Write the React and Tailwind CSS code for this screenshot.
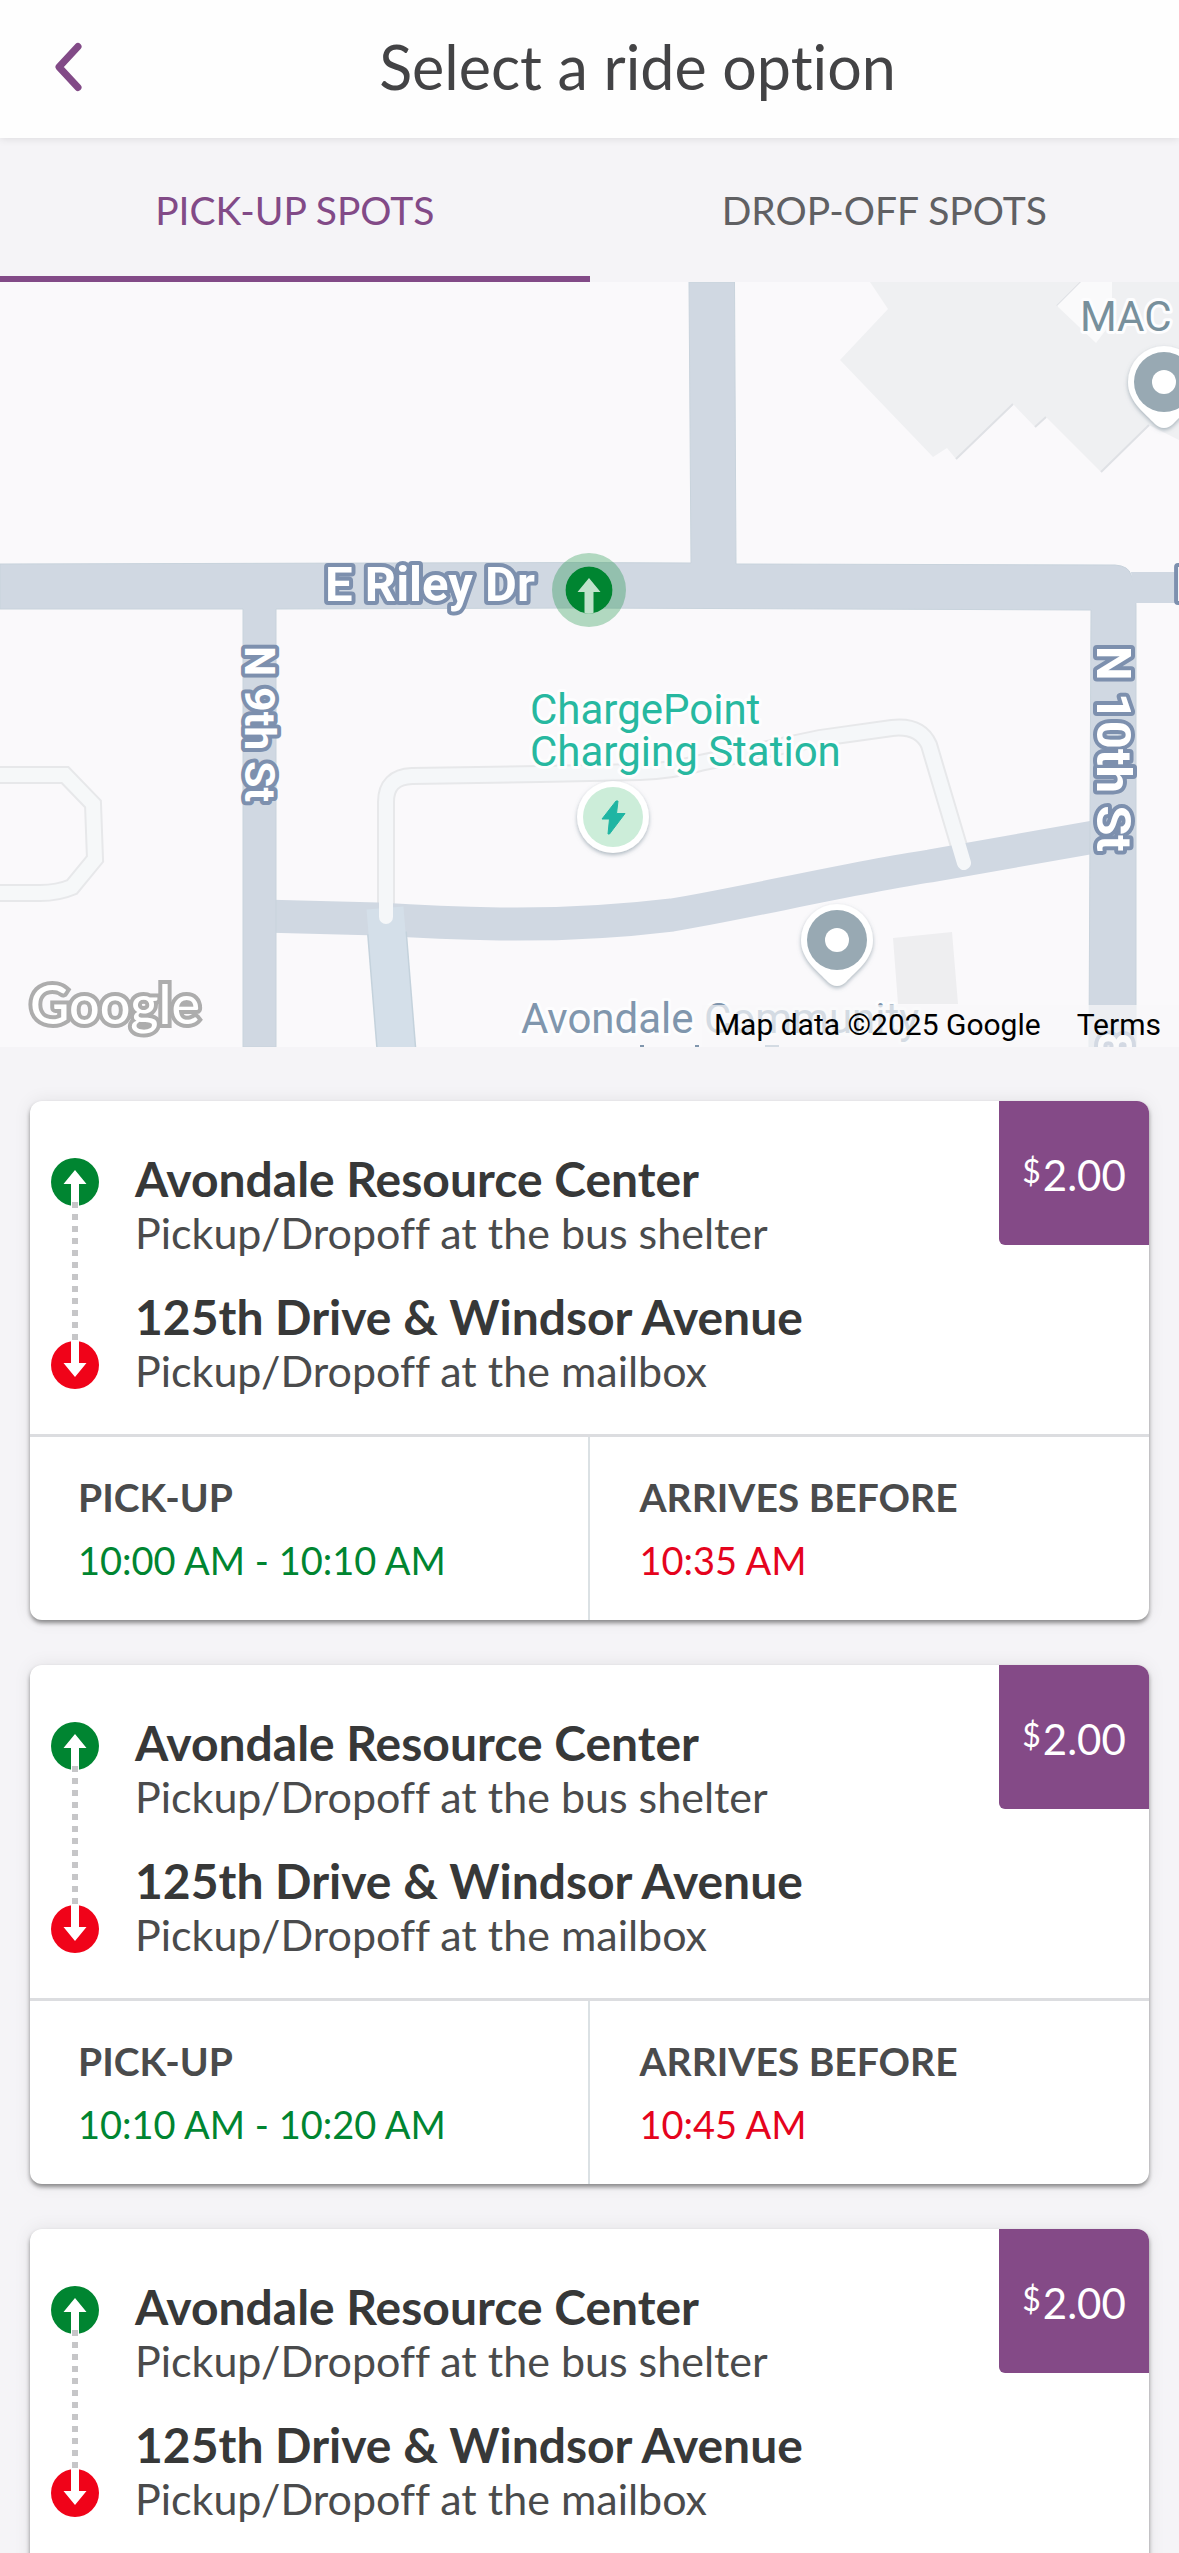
import React, { useState } from "react";

const rides = [
  { id: 1, pickup: "10:00 AM - 10:10 AM", arrival: "10:35 AM" },
  { id: 2, pickup: "10:10 AM - 10:20 AM", arrival: "10:45 AM" },
  { id: 3, pickup: "10:20 AM - 10:30 AM", arrival: "10:55 AM" },
];

function StopIcon({ down }) {
  return (
    <svg viewBox="0 0 48 48" className="block size-12" aria-hidden="true">
      <g transform={down ? "rotate(180 24 24)" : undefined}>
        <circle cx="24" cy="24" r="24" fill={down ? "#f00319" : "#008531"} />
        <path d="M24 12 L35.500 26 H28 V48 H20 V26 H12.500 Z" fill="#fff" />
      </g>
    </svg>
  );
}

function PlacePin({ x, y }) {
  return (
    <g transform={`translate(${x} ${y})`}>
      <path
        d="M0 -36 A36 36 0 0 1 36 0 C36 20 18 32 9 42 Q0 50 -9 42 C-18 32 -36 20 -36 0 A36 36 0 0 1 0 -36 Z"
        fill="#fff"
        filter="url(#soft)"
      />
      <circle r="30" fill="#98a9b3" />
      <circle r="12" fill="#fff" />
    </g>
  );
}

const streetText = {
  fill: "#fff",
  stroke: "#7d90ae",
  strokeWidth: 8,
  strokeLinejoin: "round",
  paintOrder: "stroke",
  fontWeight: 700,
};

const placeText = {
  stroke: "#fdfdfe",
  strokeWidth: 6,
  strokeLinejoin: "round",
  paintOrder: "stroke",
  fontSize: 42,
};

function StreetMap() {
  const path = "M386 635 V520 Q386 495 412 494 L540 492 L640 490 Q672 489 700 481 L820 456 L892 446 Q920 443 929 463 L964 581";
  const loop = "M-10 493 H65 L93 522 L95 577 L72 605 Q58 611 40 611 H-10";
  return (
    <svg
      viewBox="0 0 1179 765"
      preserveAspectRatio="xMidYMid slice"
      className="block size-full font-['Roboto',sans-serif]"
      role="img"
      aria-label="Map of pick-up spots"
    >
      <defs>
        <filter id="soft" x="-30%" y="-30%" width="160%" height="160%">
          <feDropShadow dx="0" dy="2" stdDeviation="2" floodColor="#6b7f8c" floodOpacity="0.55" />
        </filter>
      </defs>
      <rect width="1179" height="765" fill="#faf9fb" />

      <path
        d="M870 0 L888 27 L840 78 L933 175 L947 166 L956 177 L1013 122 L1035 145 L1046 135 L1101 190 L1149 143 L1179 158 V0 Z"
        fill="#eff0f2"
      />
      <path d="M956 177 L1013 122 M1035 145 L1046 135 M1101 190 L1149 143 M1057 24 L1081 0" stroke="#dfe1e5" strokeWidth="2" fill="none" />
      <path d="M1081 0 L1057 24 L1096 61 L1112 40 V0 Z" fill="#fafafb" />
      <path d="M893 656 L952 650 L958 722 H898 Z" fill="#eeeef0" />

      <path d={loop} fill="none" stroke="#e7e8ea" strokeWidth="18" />
      <path d={loop} fill="none" stroke="#f6f8f9" strokeWidth="14" />
      <path d={path} fill="none" stroke="#e7e8ea" strokeWidth="18" />

      <path d="M262 634 L378 637 Q440 641 500 642 Q590 643 672 633 C740 622 850 596 930 584 L1100 554" fill="none" stroke="#d0d8e2" strokeWidth="33" />
      <path d="M387 651 L397 775" fill="none" stroke="#c4d2dc" strokeWidth="40" />
      <path d="M385 626 L397 775" fill="none" stroke="#d4dfe9" strokeWidth="37" />
      <path d={path} fill="none" stroke="#f5f7f9" strokeWidth="14" strokeLinecap="round" />

      <path d="M0 282 L580 280.500 L691 281 L689 0 H734.500 L736 282 L1115 283 Q1129 284 1131 293 Q1136 300 1136 325 V765 H1089 L1091 328 L580 326 L276 327 V765 H243 V327 H0 Z" fill="#d0d8e2" stroke="#c8d3dc" strokeWidth="1" />
      <path d="M1131 290 H1179 V321 H1135 Z" fill="#d0d8e2" />

      <text x="325" y="319" fontSize="49" {...streetText}>E Riley Dr</text>
      <text x="1175" y="319" fontSize="49" {...streetText}>E</text>
      <text transform="translate(245 364) rotate(90)" fontSize="43" {...streetText}>N 9th St</text>
      <text transform="translate(1097 364) rotate(90)" fontSize="49" {...streetText}>N 10th St</text>
      <text transform="translate(1098 750) rotate(90)" fontSize="49" {...streetText}>8 St</text>

      <text x="1080" y="49" fill="#78909c" {...placeText}>MAC</text>
      <text x="530" y="442" fill="#27b8a0" {...placeText}>ChargePoint</text>
      <text x="530" y="484" fill="#27b8a0" {...placeText}>Charging Station</text>
      <text x="521" y="751" fill="#8096ad" {...placeText}>Avondale Community</text>
      <path d="M640 764 H644 M695 764 H699 M765 764 H779" stroke="#8096ad" strokeWidth="2" />

      <PlacePin x={1164} y={100} />
      <PlacePin x={837} y={658} />

      <circle cx="613" cy="535" r="36" fill="#fff" filter="url(#soft)" />
      <circle cx="613" cy="535" r="30" fill="#ccedd9" />
      <path d="M616 519 L602 537 H609.500 L608 552 L609.500 552 L625 531.500 H616.500 L618 519 Z" fill="#1fb5a3" stroke="#1fb5a3" strokeWidth="1" />

      <circle cx="589" cy="308" r="23.500" fill="#008531" />
      <path d="M589 296 L600.500 310 H593.500 V332 H584.500 V310 H577.500 Z" fill="#bfe2cb" />
      <path
        fillRule="evenodd"
        d="M589 271 A37 37 0 1 0 589 345 A37 37 0 1 0 589 271 Z M589 284.500 A23.500 23.500 0 1 1 589 331.500 A23.500 23.500 0 1 1 589 284.500 Z"
        fill="#008531"
        fillOpacity="0.29"
      />

      <text
        x="30"
        y="742"
        fontSize="54"
        fontWeight="500"
        fill="#fff"
        stroke="#adadad"
        strokeWidth="8"
        paintOrder="stroke"
        className="font-['Lato',sans-serif]"
      >
        Google
      </text>
    </svg>
  );
}

function Stop({ name, note }) {
  return (
    <div>
      <h2 className="text-[48px] leading-[58px] font-bold text-[#373838]">{name}</h2>
      <p className="text-[43px] leading-[50px] text-[#4a4b4c]">{note}</p>
    </div>
  );
}

function RideCard({ ride }) {
  return (
    <article className="shrink-0 overflow-hidden rounded-xl bg-white shadow-[0_3px_4px_rgba(0,0,0,0.42),0_0_18px_rgba(0,0,0,0.08)]">
      <div className="flex items-start border-b-3 border-[#dcdde0]">
        <div className="flex flex-col items-center pt-[57px] pl-[21px]">
          <StopIcon />
          <div className="z-10 -my-1 h-[143px] w-1.5 bg-[repeating-linear-gradient(to_bottom,#c6c6c8_0_6px,transparent_6px_12px)]" />
          <StopIcon down />
        </div>
        <div className="flex flex-1 flex-col gap-[30px] pt-[49px] pb-[38px] pl-9">
          <Stop name="Avondale Resource Center" note="Pickup/Dropoff at the bus shelter" />
          <Stop name="125th Drive & Windsor Avenue" note="Pickup/Dropoff at the mailbox" />
        </div>
        <div className="flex h-36 w-[150px] items-center justify-center rounded-bl-md bg-[#844a87] pt-1 text-[42px] text-white">
          <span className="mr-0.5 mb-2 text-[32px]">$</span>
          <span>2.00</span>
        </div>
      </div>
      <dl className="grid grid-cols-2 text-[39px] leading-[48px]">
        <div className="flex flex-col gap-[15px] border-r-2 border-[#dbe1e4] px-12 py-9">
          <dt className="font-bold text-[#4a4b4c]">PICK-UP</dt>
          <dd className="text-[38px] text-[#008531]">{ride.pickup}</dd>
        </div>
        <div className="flex flex-col gap-[15px] px-[50px] py-9">
          <dt className="font-bold text-[#4a4b4c]">ARRIVES BEFORE</dt>
          <dd className="text-[38px] text-[#e5041d]">{ride.arrival}</dd>
        </div>
      </dl>
    </article>
  );
}

export default function App() {
  const [tab, setTab] = useState("pickup");
  const tabClass = (id) =>
    id === tab
      ? "border-b-6 border-[#824a87] pt-1.5 text-[#824a87]"
      : "border-b-6 border-transparent pt-1.5 text-[#606063]";
  return (
    <div className="flex h-screen flex-col overflow-hidden bg-[#f5f4f7] font-['Lato',sans-serif] [font-variant-ligatures:none]">
      <header className="z-10 flex h-[138px] shrink-0 items-center bg-[#fefefe] pb-1 shadow-[0_1px_8px_rgba(0,0,0,0.10)]">
        <button type="button" aria-label="Back" className="flex w-24 justify-end pr-2.5">
          <svg viewBox="0 0 32 52" className="h-[52px] w-8" fill="none" stroke="#824a87" strokeWidth="7" strokeLinecap="round" strokeLinejoin="round" aria-hidden="true">
            <path d="M24 5.500 L5 26 L24 46.500" />
          </svg>
        </button>
        <h1 className="flex-1 text-center text-[61px] leading-[72px] text-[#434345]">Select a ride option</h1>
      </header>

      <div role="tablist" className="grid h-36 shrink-0 grid-cols-2 text-[39px]">
        <button type="button" role="tab" aria-selected={tab === "pickup"} onClick={() => setTab("pickup")} className={tabClass("pickup")}>
          PICK-UP SPOTS
        </button>
        <button type="button" role="tab" aria-selected={tab === "dropoff"} onClick={() => setTab("dropoff")} className={tabClass("dropoff")}>
          DROP-OFF SPOTS
        </button>
      </div>

      <section className="relative h-[765px] shrink-0 overflow-hidden">
        <StreetMap />
        <div className="absolute right-0 bottom-0 flex h-[42px] items-center gap-9 bg-[#f8f8f9]/70 pr-[18px] pb-1 pl-3 font-['Roboto',sans-serif] text-[30px] text-black">
          <span>Map data ©2025 Google</span>
          <a href="#terms">Terms</a>
        </div>
      </section>

      <main className="flex flex-1 flex-col gap-[45px] overflow-y-auto px-[30px] pt-[54px] [scrollbar-width:none]">
        {rides.map((ride) => (
          <RideCard key={ride.id} ride={ride} />
        ))}
      </main>
    </div>
  );
}
